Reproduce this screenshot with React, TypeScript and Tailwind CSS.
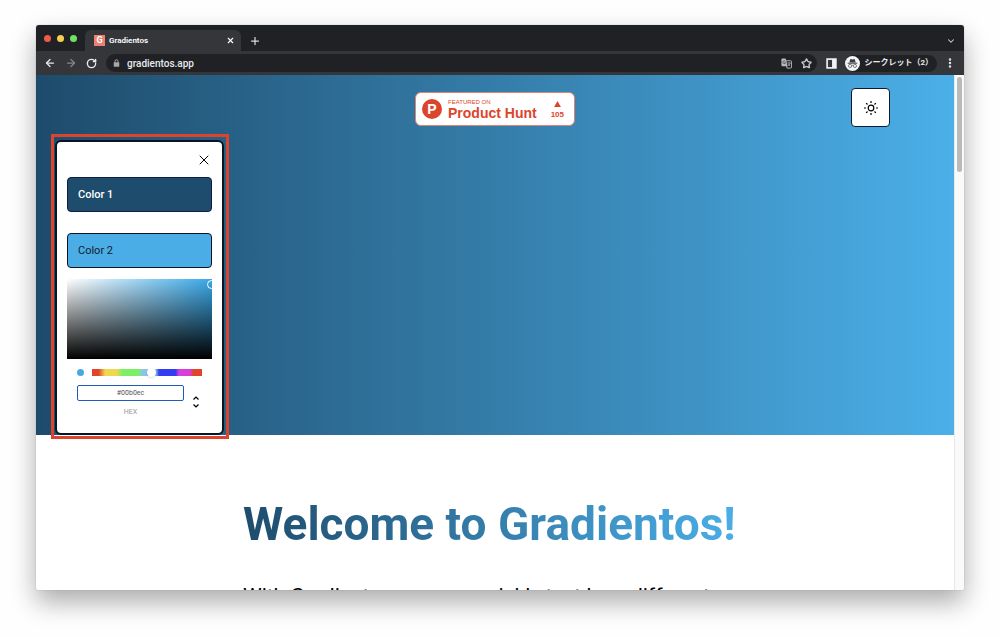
import { useState } from "react";
import type { ReactNode } from "react";
import {
  ArrowLeft,
  ArrowRight,
  ChevronDown,
  EllipsisVertical,
  Plus,
  RotateCw,
  Star,
  X,
} from "lucide-react";

type IconButtonProps = {
  label: string;
  className?: string;
  children: ReactNode;
};

function IconButton({ label, className = "", children }: IconButtonProps) {
  return (
    <button type="button" aria-label={label} className={`flex shrink-0 items-center justify-center ${className}`}>
      {children}
    </button>
  );
}

function TabBar() {
  return (
    <div className="flex h-[26px] items-end bg-[#202124] px-2">
      <div className="flex h-full items-center gap-[6px] pr-2">
        <span className="size-[7px] rounded-full bg-[#ee5a4c]" />
        <span className="size-[7px] rounded-full bg-[#f5d04e]" />
        <span className="size-[7px] rounded-full bg-[#6fe35f]" />
      </div>
      <div className="flex h-[21px] w-[156px] items-center rounded-t-md bg-[#35363a] pr-[6px] pl-[9px] text-white">
        <span className="flex size-[11px] items-center justify-center bg-[#ee7f73] text-[9px] font-bold">G</span>
        <span className="ml-1 flex-1 text-[8px] font-semibold">Gradientos</span>
        <IconButton label="Close tab">
          <X size={9} strokeWidth={3} />
        </IconButton>
      </div>
      <IconButton label="New tab" className="ml-2 h-[21px] text-[#d5d7da]">
        <Plus size={12} strokeWidth={2.5} />
      </IconButton>
      <IconButton label="Search tabs" className="ml-auto h-[21px] text-[#d5d7da]">
        <ChevronDown size={10} strokeWidth={2.5} />
      </IconButton>
    </div>
  );
}

function LockIcon() {
  return (
    <svg viewBox="0 0 14 16" className="h-[8px] w-[7px]" aria-hidden="true">
      <path d="M4 7V4.500a3 3 0 0 1 6 0V7" fill="none" stroke="#a5a7ab" strokeWidth="2" />
      <rect x="1.500" y="6.500" width="11" height="9" rx="1" fill="#a5a7ab" />
    </svg>
  );
}

function TranslateIcon() {
  return (
    <svg viewBox="0 0 24 24" className="size-[11px]" aria-hidden="true">
      <path d="M10 6h11a2 2 0 0 1 2 2v12a2 2 0 0 1-2 2h-8l-3-16Z" fill="none" stroke="#b9bbbf" strokeWidth="2" />
      <path d="M3 1h7l4.500 17H3a2 2 0 0 1-2-2V3a2 2 0 0 1 2-2Z" fill="#b9bbbf" />
      <path d="M9.500 7.500a3 3 0 1 0 .5 3H7.500" fill="none" stroke="#35363a" strokeWidth="1.600" />
      <path d="M14 11h7M17.500 9v2M20 11c-.5 3-2.500 5-4.500 6M15.500 12.500c1 2 2.500 3.500 4.500 4.500" fill="none" stroke="#b9bbbf" strokeWidth="1.500" />
    </svg>
  );
}

function IncognitoIcon() {
  return (
    <svg viewBox="0 0 28 28" className="size-[15px]" aria-hidden="true">
      <circle cx="14" cy="14" r="14" fill="#f4f5f6" />
      <path d="M10 5.500 14 6.500l4-1 2 6.500H8Z" fill="#3a3c40" />
      <path d="M5 13.500h18" stroke="#3a3c40" strokeWidth="1.800" />
      <g fill="none" stroke="#5f6368" strokeWidth="1.500">
        <circle cx="9.500" cy="18.500" r="3" />
        <circle cx="18.500" cy="18.500" r="3" />
        <path d="M12.500 18c1-.7 2-.7 3 0" />
      </g>
    </svg>
  );
}

function SunIcon() {
  return (
    <svg viewBox="0 0 28 28" className="size-[14px]" fill="none" stroke="currentColor" strokeWidth="2.400" aria-hidden="true">
      <circle cx="14" cy="14" r="5.600" />
      <path
        d="M14 0v4M14 24v4M0 14h4M24 14h4M4.400 4.400l2.600 2.600M21 21l2.600 2.600M4.400 23.600 7 21M21 7l2.600-2.600"
      />
    </svg>
  );
}

function Toolbar() {
  return (
    <div className="flex h-6 items-center bg-[#35363a] px-2 text-[#e8eaed]">
      <IconButton label="Back">
        <ArrowLeft size={12} strokeWidth={2.5} />
      </IconButton>
      <IconButton label="Forward" className="ml-[9px] text-[#84868a]">
        <ArrowRight size={12} strokeWidth={2.5} />
      </IconButton>
      <IconButton label="Reload" className="ml-[9px]">
        <RotateCw size={11} strokeWidth={3} />
      </IconButton>
      <div className="ml-[9px] flex h-[18px] flex-1 items-center rounded-full bg-[#202124] pr-[5px] pl-[7px]">
        <LockIcon />
        <input
          aria-label="Address"
          defaultValue="gradientos.app"
          className="ml-1 min-w-0 flex-1 bg-transparent px-[3px] text-[10px] font-medium text-[#e8eaed] outline-none"
        />
        <IconButton label="Translate">
          <TranslateIcon />
        </IconButton>
        <IconButton label="Bookmark" className="ml-[9px] text-[#c4c6c9]">
          <Star size={11} strokeWidth={3} />
        </IconButton>
      </div>
      <IconButton label="Side panel" className="ml-[9px]">
        <svg viewBox="0 0 20 20" className="size-[11px]" aria-hidden="true">
          <rect x="2" y="2" width="16" height="16" fill="none" stroke="#f1f3f4" strokeWidth="3" />
          <path d="M11 2h7v16h-7Z" fill="#f1f3f4" />
        </svg>
      </IconButton>
      <button type="button" className="ml-2 flex h-[17px] items-center gap-1 rounded-full bg-[#202124] pr-1">
        <IncognitoIcon />
        <span className="text-[8px] font-bold whitespace-nowrap">シークレット（2）</span>
      </button>
      <IconButton label="Menu" className="ml-[7px]">
        <EllipsisVertical size={12} strokeWidth={3} />
      </IconButton>
    </div>
  );
}

function ProductHuntBadge() {
  return (
    <a
      href="#product-hunt"
      className="flex h-[34px] w-[160px] items-center rounded-md border border-[#e08372] bg-white pr-[10px] pl-[6px] font-['Liberation_Sans'] text-[#dc452b]"
    >
      <span className="flex size-5 items-center justify-center rounded-full bg-[#dc452b] text-[14px] font-bold text-white">
        P
      </span>
      <span className="ml-[6px] flex-1 whitespace-nowrap">
        <span className="block text-[6px] leading-[7px]">FEATURED ON</span>
        <span className="block text-[14px] leading-[14px] font-bold">Product Hunt</span>
      </span>
      <span className="flex flex-col items-center gap-1 pt-[2px]">
        <svg viewBox="0 0 8 7" className="h-[6px] w-[7px]" aria-hidden="true">
          <path d="M4 0 8 7H0Z" fill="#dc452b" />
        </svg>
        <span className="text-[8px] leading-[8px] font-bold">105</span>
      </span>
    </a>
  );
}

function ColorPicker() {
  const [hex, setHex] = useState("#00b0ec");

  return (
    <div>
      <div className="relative mt-[11px] h-20 overflow-hidden bg-[linear-gradient(to_top,#000,transparent),linear-gradient(to_right,#fff,#38a8e8)]">
        <span className="absolute top-[1px] -right-1 size-[9px] rounded-full border border-white" />
      </div>
      <div className="mx-[10px] mt-[9px] flex h-2 items-center gap-2">
        <span className="size-[7px] rounded-full bg-[#48a9e2]" />
        <input
          type="range"
          aria-label="Hue"
          min={0}
          max={360}
          defaultValue={195}
          className="h-[7px] w-[110px] appearance-none bg-[linear-gradient(to_right,#e2432b_0%,#e2432b_6%,#eed850_12%,#eed850_22%,#7cf065_28%,#7cf065_42%,#8cc5e6_46%,#8cc5e6_58%,#333cf0_61%,#333cf0_76%,#d63fdc_79%,#d63fdc_89%,#e2432b_92%)] [&::-webkit-slider-thumb]:size-[9px] [&::-webkit-slider-thumb]:appearance-none [&::-webkit-slider-thumb]:rounded-full [&::-webkit-slider-thumb]:bg-white [&::-webkit-slider-thumb]:shadow"
        />
      </div>
      <div className="mt-[9px] ml-[10px] flex items-center gap-2">
        <label className="flex w-[107px] flex-col items-center text-[7px] text-[#969696]">
          <input
            value={hex}
            onChange={(e) => setHex(e.target.value)}
            className="h-4 w-full rounded-xs border border-[#1e5cb8] text-center text-[7px] text-[#555] outline-none"
          />
          <span className="mt-[5px] leading-3">HEX</span>
        </label>
        <IconButton label="Change format" className="text-black">
          <svg viewBox="0 0 8 14" className="h-[14px] w-2" aria-hidden="true">
            <path d="M1.500 4.500 4 2l2.500 2.500M1.500 9.500 4 12l2.500-2.500" fill="none" stroke="currentColor" strokeWidth="1.200" />
          </svg>
        </IconButton>
      </div>
    </div>
  );
}

function ColorPanel() {
  return (
    <section
      aria-label="Colors"
      className="absolute top-[59px] left-[15px] w-[178px] border-[3px] border-[#dc452b] pt-[3px] pr-[2px] pb-[1px] pl-[1px]"
    >
      <div className="h-[295px] rounded-md border-2 border-[#0a1524] bg-white px-[10px]">
        <div className="flex h-[35px] items-center justify-end">
          <IconButton label="Close" className="text-black">
            <X size={16} strokeWidth={1.5} />
          </IconButton>
        </div>
        <button
          type="button"
          className="flex h-[35px] w-full items-center rounded-sm border border-[#0d1e45] bg-[#1e4c6c] px-[10px] pt-[2px] text-[11px] font-medium text-white"
        >
          Color 1
        </button>
        <button
          type="button"
          className="mt-[21px] flex h-[35px] w-full items-center rounded-sm border border-[#0a1524] bg-[#4bade6] px-[10px] pt-[2px] text-[11px] text-[#12202c]"
        >
          Color 2
        </button>
        <ColorPicker />
      </div>
    </section>
  );
}

export default function App() {
  return (
    <div className="flex h-screen flex-col overflow-hidden bg-[#fefefe] px-9 pt-[25px] pb-[47px] font-[Roboto,'Noto_Sans_CJK_JP',sans-serif]">
      <div className="flex min-h-0 flex-1 flex-col rounded-[3px] shadow-[0_12px_26px_rgba(0,0,0,0.33),0_0_1px_rgba(0,0,0,0.4)]">
        <header className="overflow-hidden rounded-t-[3px]">
          <TabBar />
          <Toolbar />
        </header>
        <div className="flex min-h-0 flex-1 overflow-hidden rounded-b-[3px] bg-white">
          <main className="relative min-w-0 flex-1">
            <div className="grid h-[360px] grid-cols-[1fr_auto_1fr] items-start bg-[linear-gradient(90deg,#1e4b6b,#4bafe8)]">
              <div />
              <div className="pt-[17px]">
                <ProductHuntBadge />
              </div>
              <div className="flex justify-end pt-[13px] pr-16">
                <IconButton
                  label="Toggle theme"
                  className="size-[39px] rounded-sm border border-[#0a1a35] bg-white text-black"
                >
                  <SunIcon />
                </IconButton>
              </div>
            </div>
            <ColorPanel />
            <div className="mx-auto w-[504px] pt-[61px]">
              <h1 className="w-fit bg-[linear-gradient(80deg,#1e4b6b,#4bafe8)] bg-clip-text text-[46px] leading-[56px] font-bold whitespace-nowrap text-transparent">
                Welcome to Gradientos!
              </h1>
              <p className="mt-7 text-[21px] leading-8 text-black">
                With Gradientos you can quickly test how different
              </p>
            </div>
          </main>
          <div className="w-[10px] border-l border-[#e8e8e8] bg-[#fafafa] px-[2px] pt-[2px]">
            <div className="h-[95px] rounded-full bg-[#b9babc]" />
          </div>
        </div>
      </div>
    </div>
  );
}
